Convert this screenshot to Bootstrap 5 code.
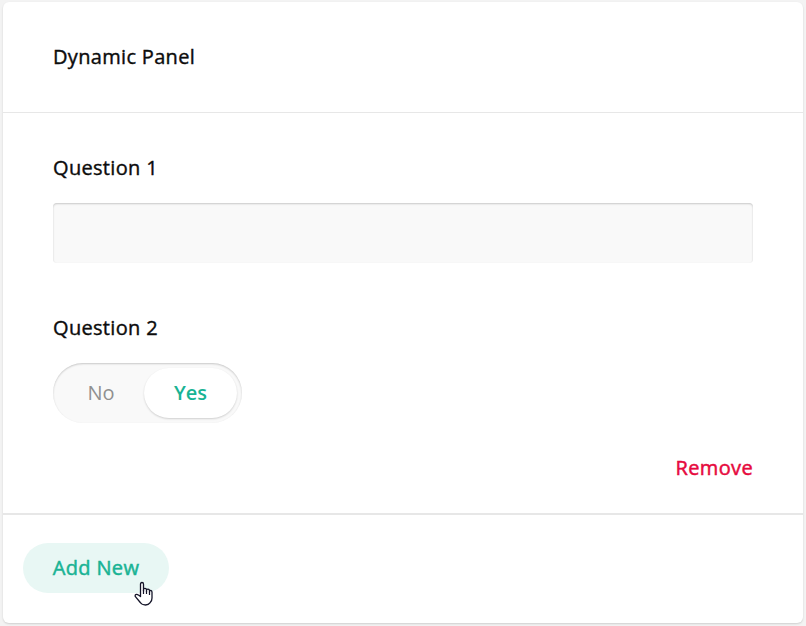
<!DOCTYPE html>
<html lang="en">
<head>
<meta charset="utf-8">
<title>Dynamic Panel</title>
<link href="https://cdn.jsdelivr.net/npm/bootstrap@5.3.0/dist/css/bootstrap.min.css" rel="stylesheet">
<style>
html,body{height:100%}
body{font-family:"Open Sans","Noto Sans",sans-serif;font-size:20px;line-height:30px;color:#161616;background:#f3f3f3;padding:2px 3px 3px;overflow:hidden}
.panel-card{border:0;border-radius:6px;box-shadow:0 1px 2px rgba(0,0,0,.15);background:#fff}
.panel-head{height:111px;padding:40px 50px;border-bottom:1px solid #e7e7e7}
.panel-main{height:402px;padding:40px 50px 0;border-bottom:2px solid #e7e7e7}
.panel-foot{padding:28px 20px 0}
.q-title{font-size:20px;line-height:30px;font-weight:400;letter-spacing:.32px;-webkit-text-stroke:.4px currentColor;color:#0c0c0c}
.q-second{margin-top:50px}
.q-input,.q-input:focus{height:60px;border:0;border-radius:4px;background:#f9f9f9;box-shadow:inset 0 1px 2px rgba(0,0,0,.2);margin-top:20px}
.switch-track{width:189px;height:60px;padding:5px;background:#f9f9f9;box-shadow:inset 0 1px 2px rgba(0,0,0,.2);margin-top:20px}
.switch-off{width:86px;color:#909090}
.switch-on{width:93px;height:50px;color:#19b394;font-weight:600;background:#fff;box-shadow:0 1px 2px rgba(0,0,0,.17)}
.btn-plain{border:0;padding:0;font-size:20px;line-height:30px;font-weight:400;letter-spacing:.35px;-webkit-text-stroke:.5px currentColor}
.btn-remove,.btn-remove:hover{color:#e60a3e}
.remove-row{margin-top:30px}
.btn-add,.btn-add:hover{width:146px;height:50px;color:#19b394;background:#e8f7f4}
.pointer{left:111px;top:38px}
</style>
<script src="https://cdn.jsdelivr.net/npm/bootstrap@5.3.0/dist/js/bootstrap.bundle.min.js"></script>
</head>
<body>
<main class="card panel-card h-100">
  <header class="panel-head"><h1 class="q-title mb-0">Dynamic Panel</h1></header>
  <section class="panel-main">
    <label class="q-title d-block" for="q1">Question 1</label>
    <input id="q1" type="text" class="form-control q-input">
    <div class="q-title q-second">Question 2</div>
    <div class="switch-track rounded-pill d-flex align-items-center">
      <span class="switch-off text-center">No</span>
      <span class="switch-on rounded-pill d-flex align-items-center justify-content-center">Yes</span>
    </div>
    <div class="d-flex justify-content-end remove-row"><button class="btn btn-plain btn-remove">Remove</button></div>
  </section>
  <footer class="panel-foot">
    <div class="position-relative d-inline-block">
      <button class="btn btn-plain btn-add rounded-pill">Add New</button>
      <svg class="pointer position-absolute" width="20" height="26" viewBox="0 0 20 26"><path d="M6.5 15.5V3.2Q6.5 1.5 8 1.5T9.5 3.2V10V8.6Q9.6 7.3 11 7.4T12.5 8.8V10.5V9.3Q12.6 8 14 8.1T15.5 9.6V11.2V10.5Q15.7 9.3 16.8 9.5T18 11V17Q18 20 16.2 21.6Q14.5 24 11.5 24Q8 24 6.3 21.5L1.2 15.3Q.9 13.5 2.5 13.3Q3.5 13.2 4.4 14Z" fill="#fff" stroke="#141428" stroke-width="1.3" stroke-linejoin="round"/><path d="M9.5 9V13M12.5 10V13M15.5 11V14" stroke="#141428" stroke-width="1.2"/></svg>
    </div>
  </footer>
</main>
</body>
</html>
